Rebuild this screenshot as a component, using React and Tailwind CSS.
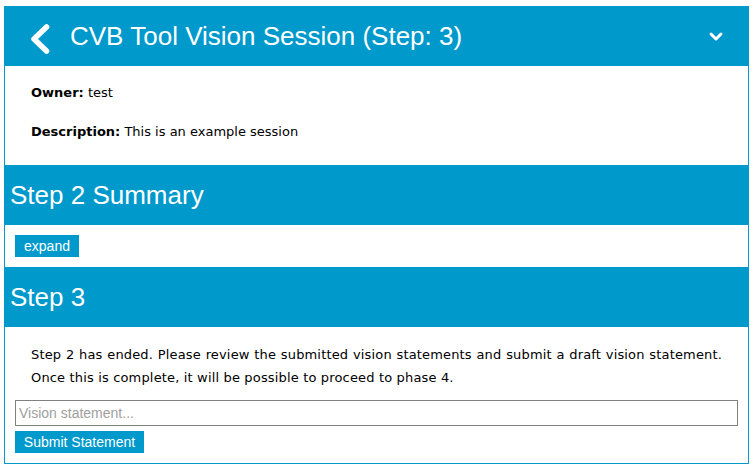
export default function App() {
  const sans = "font-['Liberation_Sans',Arial,sans-serif]";
  const verdana = "font-['DejaVu_Sans',Verdana,sans-serif]";

  return (
    <div className="bg-white w-[753px] h-[469px] px-[4px] pt-[6px]">
      <div className="border border-t-0 border-[#0099cc] bg-white">
        {/* top bar */}
        <div className="h-[60px] bg-[#0099cc] flex items-center text-white">
          <svg width="24" height="34" viewBox="0 0 24 34" className="ml-[23px] mt-[5px] shrink-0">
            <polyline
              points="18.5,5 6,17 18.5,29"
              fill="none"
              stroke="white"
              strokeWidth="5.5"
              strokeLinecap="round"
              strokeLinejoin="round"
            />
          </svg>
          <h1 className={`${sans} text-[26px] leading-none ml-[18px]`}>
            CVB Tool Vision Session (Step: 3)
          </h1>
          <svg width="16" height="12" viewBox="0 0 16 12" className="ml-auto mr-[24px] mt-[2px]">
            <polyline
              points="3,3 8,8 13,3"
              fill="none"
              stroke="white"
              strokeWidth="3"
              strokeLinecap="round"
              strokeLinejoin="round"
            />
          </svg>
        </div>

        {/* session info */}
        <div className={`${verdana} text-[13px] text-black px-[26px] pt-[19px] pb-[25px]`}>
          <p className="leading-[16px]">
            <span className="font-bold">Owner:</span> test
          </p>
          <p className="leading-[16px] mt-[23px]">
            <span className="font-bold">Description:</span> This is an example session
          </p>
        </div>

        {/* step 2 summary */}
        <div className="h-[60px] bg-[#0099cc] flex items-center pl-[5px]">
          <h2 className={`${sans} text-[26px] text-white leading-none`}>Step 2 Summary</h2>
        </div>
        <div className="p-[10px]">
          <button className={`${sans} block h-[22px] w-[64px] bg-[#0099cc] text-white text-[14px] leading-none`}>
            expand
          </button>
        </div>

        {/* step 3 */}
        <div className="h-[60px] bg-[#0099cc] flex items-center pl-[5px]">
          <h2 className={`${sans} text-[26px] text-white leading-none`}>Step 3</h2>
        </div>
        <div className="pt-[16px] pb-[10px]">
          <p className={`${verdana} text-[13px] leading-[23px] tracking-[0.16px] text-black px-[26px] text-justify`}>
            Step 2 has ended. Please review the submitted vision statements and submit a draft vision
            statement. Once this is complete, it will be possible to proceed to phase 4.
          </p>
          <div className="px-[10px] mt-[11px]">
            <input
              type="text"
              placeholder="Vision statement..."
              className={`${sans} block w-full h-[26px] border border-[#808080] px-[3px] text-[14px] placeholder:text-[#a0a0a0] outline-none`}
            />
            <button className={`${sans} block mt-[5px] h-[22px] w-[129px] bg-[#0099cc] text-white text-[14px] leading-none`}>
              Submit Statement
            </button>
          </div>
        </div>
      </div>
    </div>
  );
}
